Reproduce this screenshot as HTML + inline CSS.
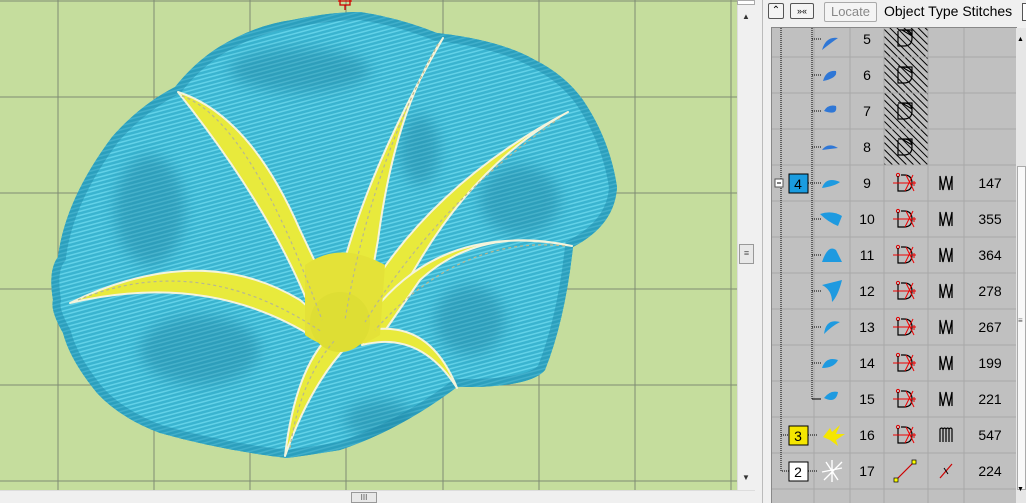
<!DOCTYPE html>
<html><head><meta charset="utf-8"><style>
*{margin:0;padding:0;box-sizing:border-box}
body{width:1026px;height:503px;overflow:hidden;background:#f0f0f0;font-family:"Liberation Sans",sans-serif;position:relative}
.abs{position:absolute}
</style></head><body>
<svg class="abs" style="left:0;top:0" width="737" height="490" viewBox="0 0 737 490">
<defs>
<pattern id="st" width="4" height="4" patternUnits="userSpaceOnUse" patternTransform="rotate(75)">
<rect width="4" height="4" fill="#3ab4d0"/><rect width="1.5" height="4" fill="#62d2e8"/></pattern>
<filter id="bl"><feGaussianBlur stdDeviation="7"/></filter>
<clipPath id="fc"><path id="fp" d="M360,12 Q400,18 437,33 Q500,40 535,60 Q565,75 583,100 Q610,140 617,187 Q615,225 573,247 Q565,320 545,370 Q530,388 457,387 Q400,430 340,450 Q310,455 287,458 Q220,450 160,433 Q120,418 97,393 Q70,360 63,333 Q50,310 53,300 Q48,270 58,257 Q65,200 112,137 Q140,105 175,87 Q195,62 219,47 Q255,25 292,20 Q330,12 360,12Z"/></clipPath>
</defs>
<rect width="737" height="490" fill="#c5dd9d"/>
<g stroke="#7f8a74" stroke-width="1">
<path d="M58,0V490M154,0V490M250,0V490M346,0V490M443,0V490M539,0V490M635,0V490M731,0V490M0,1H737M0,97H737M0,193H737M0,289H737M0,385H737M0,481H737"/>
</g>
<use href="#fp" fill="#34a9c8"/>
<g clip-path="url(#fc)">
<rect width="737" height="490" fill="url(#st)"/>
<g fill="#1d7f9c" opacity=".4" filter="url(#bl)">
<ellipse cx="300" cy="70" rx="70" ry="22"/><ellipse cx="150" cy="210" rx="35" ry="55"/>
<ellipse cx="520" cy="200" rx="40" ry="35"/><ellipse cx="200" cy="350" rx="60" ry="35"/>
<ellipse cx="470" cy="320" rx="35" ry="35"/><ellipse cx="380" cy="420" rx="35" ry="20"/>
<ellipse cx="420" cy="150" rx="20" ry="35"/>
</g>
<use href="#fp" fill="none" stroke="#1a86a6" stroke-width="16" opacity=".45"/>
</g>
<g fill="#e8ea3c" stroke="#f4f4dc" stroke-width="2" stroke-linejoin="round">
<path d="M178,92 Q250,115 300,230 L345,325 L318,330 Q280,220 178,92Z"/>
<path d="M443,38 Q395,110 378,240 L362,330 L330,325 Q350,200 443,38Z"/>
<path d="M568,112 Q480,160 420,260 L378,330 L352,320 Q420,190 568,112Z"/>
<path d="M572,246 Q480,225 420,280 L382,335 L368,318 Q440,220 572,246Z"/>
<path d="M70,303 Q200,240 300,300 L335,330 L318,340 Q210,270 70,303Z"/>
<path d="M285,456 Q295,370 330,335 L348,345 Q310,385 285,456Z"/>
<path d="M457,388 Q430,320 370,330 L362,345 Q420,330 457,388Z"/>
</g>
<path d="M305,265 Q340,240 385,265 L380,335 Q340,360 305,335Z" fill="#e4e238"/>
<ellipse cx="340" cy="322" rx="30" ry="30" fill="#dede34"/>
<g stroke="#b8b890" stroke-width="1.2" stroke-dasharray="3 3" fill="none">
<path d="M182,96 Q250,120 322,320"/><path d="M438,44 Q370,170 345,320"/><path d="M560,118 Q440,200 365,322"/><path d="M78,300 Q200,250 322,332"/><path d="M565,246 Q460,235 375,330"/><path d="M290,448 Q300,380 335,340"/>
</g>
<g stroke="#c00" stroke-width="1.3" fill="none"><rect x="340" y="-3" width="10" height="8"/><path d="M345,5V10M338,1H352"/></g>
</svg>
<div class="abs" style="left:737px;top:0;width:18px;height:490px;background:#f0f0f0;border-left:1px solid #ddd"></div>
<div class="abs" style="left:737px;top:0;width:18px;height:5px;background:#fff;border:1px solid #aaa"></div>
<div class="abs" style="left:742px;top:12px;font-size:8px;color:#333">▲</div>
<div class="abs" style="left:739px;top:244px;width:15px;height:20px;background:#e8e8e8;border:1px solid #999;font-size:9px;text-align:center;line-height:17px;color:#555">≡</div>
<div class="abs" style="left:742px;top:473px;font-size:8px;color:#333">▼</div>
<div class="abs" style="left:0;top:490px;width:755px;height:13px;background:#f0f0f0;border-top:1px solid #ddd"></div>
<div class="abs" style="left:351px;top:492px;width:26px;height:11px;background:#e8e8e8;border:1px solid #999;font-size:8px;text-align:center;line-height:10px;color:#555">III</div>
<div class="abs" style="left:755px;top:0;width:8px;height:503px;background:#f0f0f0;border-right:1px solid #bbb"></div>
<div class="abs" style="left:768px;top:3px;width:16px;height:16px;border:1px solid #555;border-radius:2px;background:#f4f4f4;font-size:10px;text-align:center;line-height:13px">⌃</div>
<div class="abs" style="left:790px;top:3px;width:24px;height:16px;border:1px solid #555;border-radius:2px;background:#f4f4f4;font-size:9px;text-align:center;line-height:14px">»«</div>
<div class="abs" style="left:824px;top:2px;width:53px;height:20px;border:1px solid #aaa;border-radius:2px;background:#f4f4f4;font-size:13px;color:#888;text-align:center;line-height:18px">Locate</div>
<div class="abs" style="left:884px;top:3px;font-size:14px;color:#000">Object Type Stitches</div>
<div class="abs" style="left:1022px;top:3px;width:6px;height:18px;border:1px solid #555;background:#fff"></div>
<div class="abs" style="left:771px;top:27px;width:246px;height:476px;background:#c0c0c0;border-left:1px solid #888;border-top:1px solid #888;overflow:hidden"></div>
<div class="abs" style="left:1016px;top:28px;width:10px;height:475px;background:#e6e6e6"></div>
<div class="abs" style="left:1017px;top:36px;font-size:7px">▲</div>
<div class="abs" style="left:1017px;top:166px;width:9px;height:324px;background:#f8f8f8;border:1px solid #aaa"></div>
<div class="abs" style="left:1018px;top:316px;font-size:8px;color:#555">≡</div>
<div class="abs" style="left:1017px;top:486px;font-size:7px">▼</div>
<svg class="abs" style="left:772px;top:28px" width="244" height="475" viewBox="772 28 244 475">
<defs><pattern id="h" width="5" height="5" patternUnits="userSpaceOnUse" patternTransform="rotate(45)"><rect width="5" height="5" fill="#c0c0c0"/><rect width="5" height="1" fill="#000"/></pattern>
<g id="ds"><circle cx="-6" cy="-8" r="1.6" fill="none" stroke="#d00"/><path d="M-6,-7V8H0Q8,8 8,0Q8,-8 0,-8H-3" fill="none" stroke="#000" stroke-width="1.2"/><path d="M-11,0H12M10,-2V3M2,-8L10,8M1,8L9,-8" stroke="#e00" fill="none"/></g>
<g id="dh"><path d="M-6,-7V8H0Q8,8 8,0Q8,-8 0,-8H-6M-2,-8L8,-2L8,-8Z" fill="none" stroke="#000" stroke-width="1.2"/></g>
<g id="zz"><path d="M-6,7V-7L-3,7L0,-7L3,7L6,-7V7" fill="none" stroke="#000" stroke-width="1.3"/></g>
</defs>
<rect x="884" y="28" width="44" height="137" fill="url(#h)"/>
<g stroke="#a8a8a8"><path d="M814,28V503M850,28V503M884,28V503M928,28V503M964,28V503M772,57H1016M772,93H1016M772,129H1016M772,165H1016M772,201H1016M772,237H1016M772,273H1016M772,309H1016M772,345H1016M772,381H1016M772,417H1016M772,453H1016M772,489H1016"/></g>
<g stroke="#000" stroke-dasharray="1 1" fill="none"><path d="M781,28V471H789M812,28V399H820M812,39H822M812,75H822M812,111H822M812,147H822M804,183H822M812,219H822M812,255H822M812,291H822M812,327H822M812,363H822M812,399H822M781,435H789M808,435H818M808,471H818"/></g>
<g fill="#2f77d6"><path d="M822,50Q826,36 838,38Q832,42 822,50Z"/><path d="M823,81Q826,70 836,71Q838,78 823,81Z"/><path d="M824,111Q828,104 836,106Q838,116 824,111Z"/><path d="M822,150Q828,142 838,148Z"/></g>
<g fill="#1e9ae0"><path d="M822,188Q826,176 840,182Q835,186 822,188Z"/><path d="M820,214Q832,210 842,216L838,226Q828,222 820,214Z"/><path d="M822,262Q828,244 836,250L842,262Z"/><path d="M822,285L842,280Q838,296 832,302Q832,290 822,285Z"/><path d="M824,334Q826,318 840,322Q832,326 824,334Z"/><path d="M822,368Q826,356 838,360Q834,368 822,368Z"/><path d="M824,398Q830,390 838,392Q836,404 824,398Z"/></g>
<path d="M823,437L830,428L832,432L840,425L836,434L845,434L836,440L838,446L830,440Z" fill="#f5e600"/>
<g stroke="#fff" stroke-width="1.4"><path d="M822,472L842,468M826,462L838,480M832,460V482M824,480L842,462"/></g>
<rect x="789" y="174" width="19" height="19" fill="#1a9ce0" stroke="#000"/>
<rect x="775" y="179" width="8" height="8" fill="#fff" stroke="#555"/><path d="M777,183H781" stroke="#000"/>
<rect x="789" y="426" width="19" height="19" fill="#f5e600" stroke="#000"/>
<rect x="789" y="462" width="19" height="19" fill="#fff" stroke="#000"/>
<g font-family="Liberation Sans" font-size="14" text-anchor="middle">
<text x="798" y="189">4</text><text x="798" y="441">3</text><text x="798" y="477">2</text>
<text x="867" y="44">5</text><text x="867" y="80">6</text><text x="867" y="116">7</text><text x="867" y="152">8</text><text x="867" y="188">9</text>
<text x="867" y="224">10</text><text x="867" y="260">11</text><text x="867" y="296">12</text><text x="867" y="332">13</text><text x="867" y="368">14</text><text x="867" y="404">15</text><text x="867" y="440">16</text><text x="867" y="476">17</text>
<text x="990" y="188">147</text><text x="990" y="224">355</text><text x="990" y="260">364</text><text x="990" y="296">278</text><text x="990" y="332">267</text><text x="990" y="368">199</text><text x="990" y="404">221</text><text x="990" y="440">547</text><text x="990" y="476">224</text>
</g>
<use href="#dh" x="904" y="38"/><use href="#dh" x="904" y="75"/><use href="#dh" x="904" y="111"/><use href="#dh" x="904" y="147"/>
<use href="#ds" x="904" y="183"/><use href="#ds" x="904" y="219"/><use href="#ds" x="904" y="255"/><use href="#ds" x="904" y="291"/><use href="#ds" x="904" y="327"/><use href="#ds" x="904" y="363"/><use href="#ds" x="904" y="399"/><use href="#ds" x="904" y="435"/>
<use href="#zz" x="946" y="183"/><use href="#zz" x="946" y="219"/><use href="#zz" x="946" y="255"/><use href="#zz" x="946" y="291"/><use href="#zz" x="946" y="327"/><use href="#zz" x="946" y="363"/><use href="#zz" x="946" y="399"/>
<path d="M940,442V429Q942,427 943,429V442M943,429Q945,427 946,429V442M946,429Q948,427 949,429V442M949,429Q951,427 952,429V442" fill="none" stroke="#000" stroke-width="1.2"/>
<path d="M896,480L914,462" stroke="#c00" stroke-width="1.2"/><rect x="894" y="478" width="4" height="4" fill="#ff0" stroke="#000" stroke-width=".7"/><rect x="912" y="460" width="4" height="4" fill="#ff0" stroke="#000" stroke-width=".7"/>
<path d="M940,478L952,464" stroke="#c00" stroke-width="1.2"/><path d="M944,468L948,474" stroke="#000"/>
</svg>
</body></html>
